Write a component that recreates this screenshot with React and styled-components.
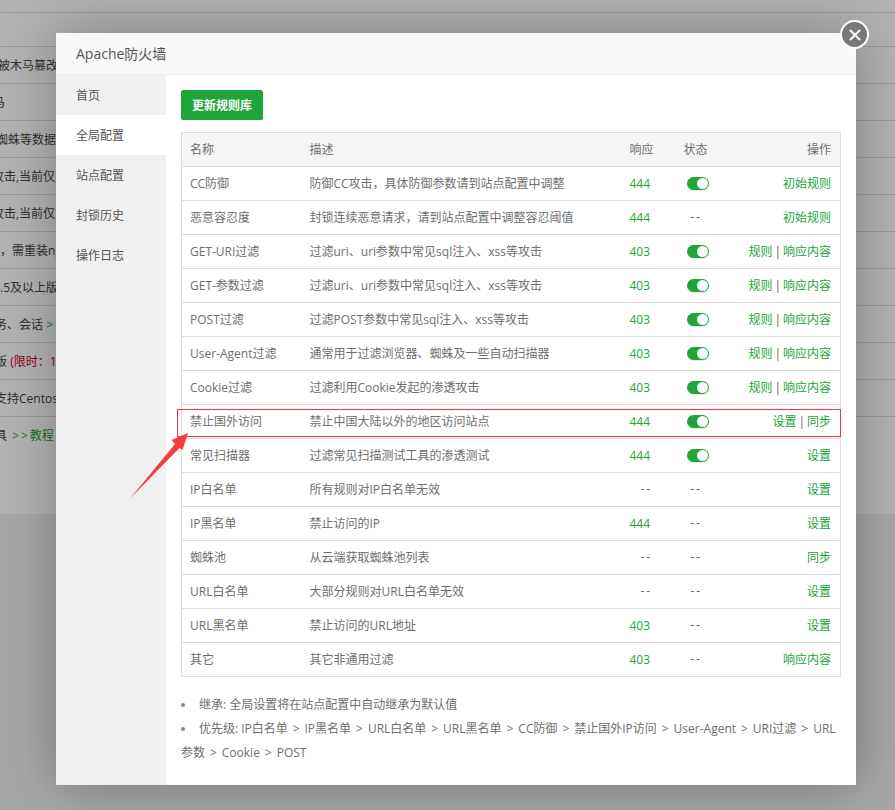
import React from 'react'
import styled, { createGlobalStyle } from 'styled-components'

const Global = createGlobalStyle`
  html, body {
    margin: 0;
    padding: 0;
    background: #f0f0f0;
  }
  body {
    width: 895px;
    height: 810px;
    overflow: hidden;
    font-family: "Open Sans", "Noto Sans CJK SC", sans-serif;
    font-size: 12px;
    color: #6e6e6e;
  }
`

const Page = styled.div`
  position: relative;
  width: 895px;
  height: 810px;
  overflow: hidden;
  background: #f0f0f0;
`

const BackPanel = styled.div`
  height: 514px;
  background: #fff;
  padding-top: 12px;
  box-sizing: border-box;
`

const BackRow = styled.div`
  height: ${p => (p.$first ? '34px' : '37px')};
  border-top: 1px solid #ddd;
  box-sizing: border-box;
  line-height: 37px;
  font-size: 12px;
  color: #444;
  white-space: nowrap;
  overflow: hidden;
  text-indent: ${p => p.$indent || 0}px;
`

const Red = styled.span`
  color: #d0002a;
`
const Green = styled.span`
  color: #20a53a;
`
const Chevrons = styled(Green)`
  margin-left: 2px;
  letter-spacing: 2px;
`

const Shade = styled.div`
  position: absolute;
  inset: 0;
  background: rgba(0, 0, 0, 0.3);
`

const Modal = styled.div`
  position: absolute;
  left: 56px;
  top: 33px;
  width: 800px;
  height: 752px;
  background: #fff;
  box-shadow: 1px 1px 50px rgba(0, 0, 0, 0.3);
  display: flex;
  flex-direction: column;
`

const Title = styled.div`
  height: 41px;
  line-height: 42px;
  padding-left: 20px;
  background: #f8f8f8;
  border-bottom: 1px solid #eee;
  font-size: 14px;
  color: #555;
`

const Body = styled.div`
  flex: 1;
  display: flex;
  min-height: 0;
`

const Side = styled.div`
  flex: 0 0 110px;
  background: #f0f0f0;
`

const SideItem = styled.div`
  height: 40px;
  line-height: 42px;
  padding-left: 20px;
  color: #555;
  background: ${p => (p.$active ? '#fff' : 'transparent')};
`

const Main = styled.div`
  flex: 1;
  min-width: 0;
  padding: 15px;
`

const Button = styled.button`
  display: block;
  width: 82px;
  height: 30px;
  padding: 0;
  border: 1px solid #20a53a;
  border-radius: 2px;
  background: #20a53a;
  color: #fff;
  font: inherit;
  font-weight: 700;
`

const Table = styled.table`
  width: 659px;
  margin-top: 12px;
  border-collapse: collapse;
  table-layout: fixed;
  border: 1px solid #ddd;
`

const Th = styled.th`
  height: 31px;
  padding: 0 9px 2px 8px;
  background: #f5f5f5;
  border-bottom: 1px solid #ddd;
  font-weight: 400;
  color: #6e6e6e;
  text-align: ${p => p.$align || 'left'};
`

const Td = styled.td`
  height: 31px;
  padding: 0 9px 2px 8px;
  border-bottom: 1px solid #ddd;
  text-align: ${p => p.$align || 'left'};
  white-space: nowrap;
`

const Code = styled.span`
  color: #20a53a;
  vertical-align: -1px;
`

const Dash = styled.span`
  display: block;
  color: #666;
  letter-spacing: 2px;
  padding-left: ${p => p.$pad || 0}px;
`

const Toggle = styled.span`
  display: block;
  position: relative;
  top: 1px;
  width: 22px;
  height: 13px;
  margin-left: 3px;
  border-radius: 7px;
  background: #20a53a;
  box-shadow: 0 1px 1px rgba(0, 0, 0, 0.1);
  &::after {
    content: '';
    position: absolute;
    right: 1px;
    top: 1px;
    width: 11px;
    height: 11px;
    border-radius: 50%;
    background: #fff;
  }
`

const Act = styled.a`
  color: #20a53a;
`

const Sep = styled.span`
  color: #666;
  margin: 0 2px;
`

const Notes = styled.ul`
  margin: 16px 0 0;
  padding: 0;
  list-style: none;
`

const Note = styled.li`
  line-height: 24px;
  color: #6e6e6e;
  word-spacing: 1.85px;
  &::before {
    content: '';
    display: inline-block;
    width: 4px;
    height: 4px;
    margin: 0 14px 2px 0;
    border-radius: 50%;
    background: #888;
  }
`

const NoteKey = styled.span`
  margin-right: 3px;
`

const Close = styled.div`
  position: absolute;
  left: 840px;
  top: 20px;
  width: 25px;
  height: 25px;
  border: 2px solid #fff;
  border-radius: 50%;
  background: #787878;
  display: flex;
  align-items: center;
  justify-content: center;
`

const Mark = styled.div`
  position: absolute;
  left: 177px;
  top: 409px;
  width: 662px;
  height: 26px;
  border: 1px solid #f33;
`

const Arrow = styled.svg`
  position: absolute;
  left: 120px;
  top: 420px;
`

const rows = [
  ['CC防御', '防御CC攻击\uFF0C具体防御参数请到站点配置中调整', '444', true, ['初始规则']],
  ['恶意容忍度', '封锁连续恶意请求\uFF0C请到站点配置中调整容忍阈值', '444', false, ['初始规则']],
  ['GET-URI过滤', '过滤uri、uri参数中常见sql注入、xss等攻击', '403', true, ['规则', '响应内容']],
  ['GET-参数过滤', '过滤uri、uri参数中常见sql注入、xss等攻击', '403', true, ['规则', '响应内容']],
  ['POST过滤', '过滤POST参数中常见sql注入、xss等攻击', '403', true, ['规则', '响应内容']],
  ['User-Agent过滤', '通常用于过滤浏览器、蜘蛛及一些自动扫描器', '403', true, ['规则', '响应内容']],
  ['Cookie过滤', '过滤利用Cookie发起的渗透攻击', '403', true, ['规则', '响应内容']],
  ['禁止国外访问', '禁止中国大陆以外的地区访问站点', '444', true, ['设置', '同步']],
  ['常见扫描器', '过滤常见扫描测试工具的渗透测试', '444', true, ['设置']],
  ['IP白名单', '所有规则对IP白名单无效', null, false, ['设置']],
  ['IP黑名单', '禁止访问的IP', '444', false, ['设置']],
  ['蜘蛛池', '从云端获取蜘蛛池列表', null, false, ['同步']],
  ['URL白名单', '大部分规则对URL白名单无效', null, false, ['设置']],
  ['URL黑名单', '禁止访问的URL地址', '403', false, ['设置']],
  ['其它', '其它非通用过滤', '403', false, ['响应内容']],
]

const sideItems = ['首页', '全局配置', '站点配置', '封锁历史', '操作日志']

export default function App() {
  return (
    <Page>
      <Global />
      <BackPanel>
        <BackRow $first />
        <BackRow $indent={-2}>被木马篡改</BackRow>
        <BackRow $indent={-7}>马</BackRow>
        <BackRow $indent={-4}>蜘蛛等数据</BackRow>
        <BackRow $indent={-8}>攻击,当前仅支</BackRow>
        <BackRow $indent={-8}>攻击,当前仅支</BackRow>
        <BackRow>{'\uFF0C'}需重装nginx</BackRow>
        <BackRow>.5及以上版本</BackRow>
        <BackRow $indent={-5}>务、会话 <Green>&gt;</Green></BackRow>
        <BackRow $indent={-5}>版 <Red>(限时{'\uFF1A'}10</Red></BackRow>
        <BackRow $indent={-5}>支持Centos</BackRow>
        <BackRow $indent={-5}>具 <Chevrons>&gt;&gt;</Chevrons><Green>教程</Green></BackRow>
      </BackPanel>
      <Shade />
      <Modal>
        <Title>Apache防火墙</Title>
        <Body>
          <Side>
            {sideItems.map((s, i) => (
              <SideItem key={s} $active={i === 1}>{s}</SideItem>
            ))}
          </Side>
          <Main>
            <Button>更新规则库</Button>
            <Table>
              <colgroup>
                <col width="120" />
                <col width="320" />
                <col width="54" />
                <col width="50" />
                <col width="115" />
              </colgroup>
              <thead>
                <tr>
                  <Th>名称</Th>
                  <Th>描述</Th>
                  <Th>响应</Th>
                  <Th>状态</Th>
                  <Th $align="right">操作</Th>
                </tr>
              </thead>
              <tbody>
                {rows.map(r => (
                  <tr key={r[0]}>
                    <Td>{r[0]}</Td>
                    <Td>{r[1]}</Td>
                    <Td>{r[2] ? <Code>{r[2]}</Code> : <Dash $pad={11}>--</Dash>}</Td>
                    <Td>{r[3] ? <Toggle /> : <Dash $pad={7}>--</Dash>}</Td>
                    <Td $align="right">
                      {r[4].map((a, i) => (
                        <React.Fragment key={a}>
                          {i > 0 && <Sep>|</Sep>}
                          <Act>{a}</Act>
                        </React.Fragment>
                      ))}
                    </Td>
                  </tr>
                ))}
              </tbody>
            </Table>
            <Notes>
              <Note><NoteKey>继承:</NoteKey>全局设置将在站点配置中自动继承为默认值</Note>
              <Note><NoteKey>优先级:</NoteKey>IP白名单 &gt; IP黑名单 &gt; URL白名单 &gt; URL黑名单 &gt; CC防御 &gt; 禁止国外IP访问 &gt; User-Agent &gt; URI过滤 &gt; URL参数 &gt; Cookie &gt; POST</Note>
            </Notes>
          </Main>
        </Body>
      </Modal>
      <Close>
        <svg width="12" height="12" viewBox="0 0 12 12">
          <path d="M1.5 1.5L10.5 10.5M10.5 1.5L1.5 10.5" stroke="#fff" strokeWidth="2" strokeLinecap="round" />
        </svg>
      </Close>
      <Mark />
      <Arrow width="80" height="85" viewBox="0 0 80 85">
        <path d="M68 13L62.5 30L59.5 28L10 78.5L55 24L51.5 20Z" fill="#f33f3f" />
      </Arrow>
    </Page>
  )
}
